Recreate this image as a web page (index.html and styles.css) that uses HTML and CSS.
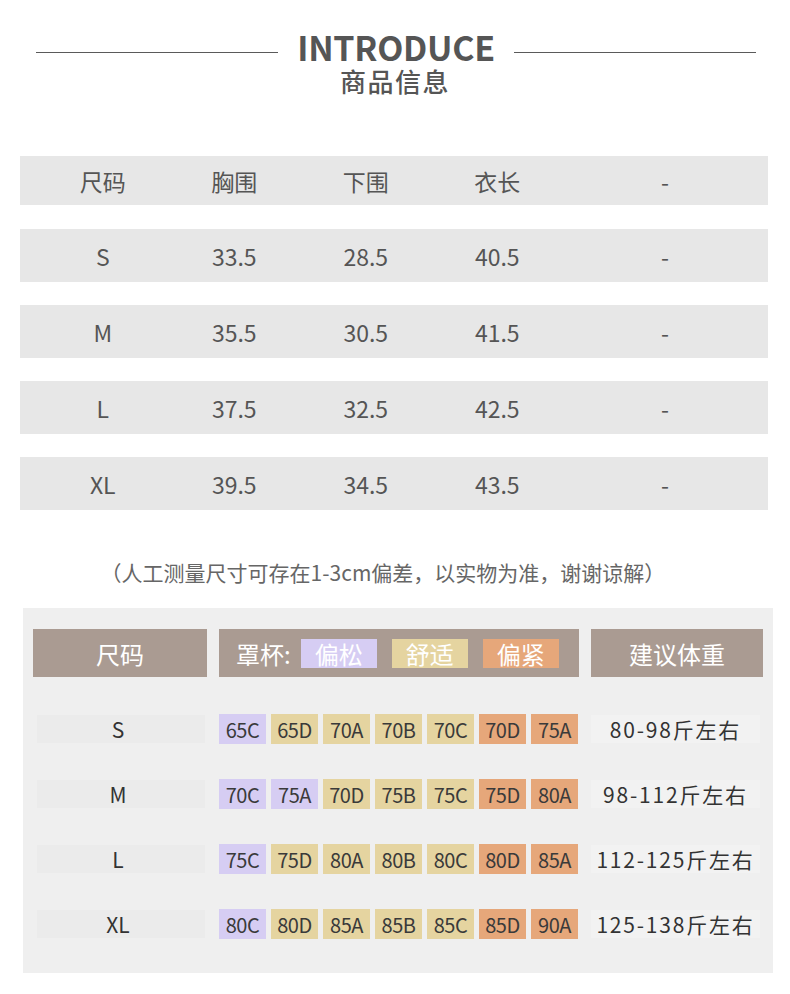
FILE: index.html
```html
<!DOCTYPE html>
<html lang="zh-CN">
<head>
<meta charset="utf-8">
<title>INTRODUCE 商品信息</title>
<link rel="stylesheet" href="styles.css">
</head>
<body>
<header class="intro">
  <div class="title-row">
    <span class="rule"></span>
    <h1 class="title">INTRODUCE</h1>
    <span class="rule"></span>
  </div>
  <div class="subtitle">商品信息</div>
</header>

<section class="size-table">
  <div class="srow head"><span>尺码</span><span>胸围</span><span>下围</span><span>衣长</span><span>-</span></div>
  <div class="srow"><span>S</span><span>33.5</span><span>28.5</span><span>40.5</span><span>-</span></div>
  <div class="srow"><span>M</span><span>35.5</span><span>30.5</span><span>41.5</span><span>-</span></div>
  <div class="srow"><span>L</span><span>37.5</span><span>32.5</span><span>42.5</span><span>-</span></div>
  <div class="srow"><span>XL</span><span>39.5</span><span>34.5</span><span>43.5</span><span>-</span></div>
</section>

<p class="note">（人工测量尺寸可存在1-3cm偏差，以实物为准，谢谢谅解）</p>

<section class="cup-block">
  <div class="cgrid">
    <div class="hcell">尺码</div>
    <div class="hcell cup-head">罩杯:<span class="tag loose">偏松</span><span class="tag fit">舒适</span><span class="tag tight">偏紧</span></div>
    <div class="hcell">建议体重</div>

    <div class="size-cell">S</div>
    <div class="chips"><span class="chip loose">65C</span><span class="chip fit">65D</span><span class="chip fit">70A</span><span class="chip fit">70B</span><span class="chip fit">70C</span><span class="chip tight">70D</span><span class="chip tight">75A</span></div>
    <div class="weight-cell">80-98斤左右</div>

    <div class="size-cell">M</div>
    <div class="chips"><span class="chip loose">70C</span><span class="chip loose">75A</span><span class="chip fit">70D</span><span class="chip fit">75B</span><span class="chip fit">75C</span><span class="chip tight">75D</span><span class="chip tight">80A</span></div>
    <div class="weight-cell">98-112斤左右</div>

    <div class="size-cell">L</div>
    <div class="chips"><span class="chip loose">75C</span><span class="chip fit">75D</span><span class="chip fit">80A</span><span class="chip fit">80B</span><span class="chip fit">80C</span><span class="chip tight">80D</span><span class="chip tight">85A</span></div>
    <div class="weight-cell">112-125斤左右</div>

    <div class="size-cell">XL</div>
    <div class="chips"><span class="chip loose">80C</span><span class="chip fit">80D</span><span class="chip fit">85A</span><span class="chip fit">85B</span><span class="chip fit">85C</span><span class="chip tight">85D</span><span class="chip tight">90A</span></div>
    <div class="weight-cell">125-138斤左右</div>
  </div>
</section>
</body>
</html>
```

FILE: styles.css
```css
* { box-sizing: border-box; }

body {
  margin: 0;
  background: #ffffff;
  font-family: "Noto Sans CJK SC", "Noto Sans", sans-serif;
  color: #555555;
}

/* ---------- header ---------- */
.intro {
  padding-top: 29px;
  display: flex;
  flex-direction: column;
  align-items: center;
}

.title-row {
  width: 100%;
  display: flex;
  justify-content: space-between;
  align-items: flex-start;
  padding: 0 34px 0 36px;
}

.rule {
  width: 242px;
  height: 1px;
  margin-top: 23px;
  background: #5a5a5a;
}

.title {
  margin: 0;
  font-size: 34px;
  line-height: 36px;
  font-weight: 700;
  color: #555555;
  letter-spacing: -0.3px;
}

.subtitle {
  margin-top: 2px;
  font-size: 26px;
  line-height: 28px;
  letter-spacing: 1.5px;
  font-weight: 500;
  color: #555555;
}

/* ---------- size table ---------- */
.size-table {
  margin: 61px 22px 0 20px;
  display: flex;
  flex-direction: column;
  gap: 23px;
}

.srow {
  height: 53px;
  background: #e7e7e7;
  display: grid;
  grid-template-columns: 131.5px 131.5px 131.5px 131.5px 1fr;
  padding-left: 17px;
  align-items: center;
  font-size: 23px;
  color: #555555;
}

.srow.head {
  height: 49px;
  margin-bottom: 1px;
}

.srow span {
  text-align: center;
}

.srow span:last-child {
  text-align: center;
  width: 204px;
}

/* ---------- note ---------- */
.note {
  margin: 50px 0 0;
  text-align: center;
  font-size: 21px;
  line-height: 24px;
  color: #666666;
  padding-right: 24px;
}

/* ---------- cup block ---------- */
.cup-block {
  margin: 24px 17px 0 23px;
  background: #efefef;
  padding: 21px 8px 34px 10px;
}

.cgrid {
  display: grid;
  grid-template-columns: 174px 358px 174px;
  column-gap: 12px;
  row-gap: 35px;
  align-items: center;
}

.cgrid > :nth-child(3n+2) { margin-right: -2px; }
.cgrid > :nth-child(3n) { margin-left: 2px; }

.hcell {
  height: 48px;
  background: #aa9b92;
  color: #ffffff;
  font-size: 24px;
  display: flex;
  align-items: center;
  justify-content: center;
  margin-bottom: 2px;
}

.cup-head {
  justify-content: flex-start;
  padding-left: 17px;
}

.tag {
  width: 76px;
  height: 29px;
  display: inline-flex;
  align-items: center;
  justify-content: center;
  color: #ffffff;
  font-size: 24px;
  margin-left: 15px;
}
.cup-head .tag.loose { margin-left: 10px; }

.loose { background: #d6cdf3; }
.fit { background: #e5d4a0; }
.tight { background: #e6a77a; }

.size-cell {
  height: 28px;
  margin: 0 2px 0 4px;
  padding-right: 6px;
  background: #ebebeb;
  display: flex;
  align-items: center;
  justify-content: center;
  font-size: 21px;
  color: #333333;
}

.chips {
  display: flex;
  gap: 5px;
}

.chip {
  width: 47px;
  height: 30px;
  display: flex;
  align-items: center;
  justify-content: center;
  font-size: 20px;
  color: #3a3a3a;
  letter-spacing: -0.5px;
}

.weight-cell {
  height: 28px;
  margin: 0 3px 0 0;
  background: #f2f2f2;
  display: flex;
  align-items: center;
  justify-content: center;
  font-size: 21px;
  letter-spacing: 1.8px;
  color: #333333;
}
```
